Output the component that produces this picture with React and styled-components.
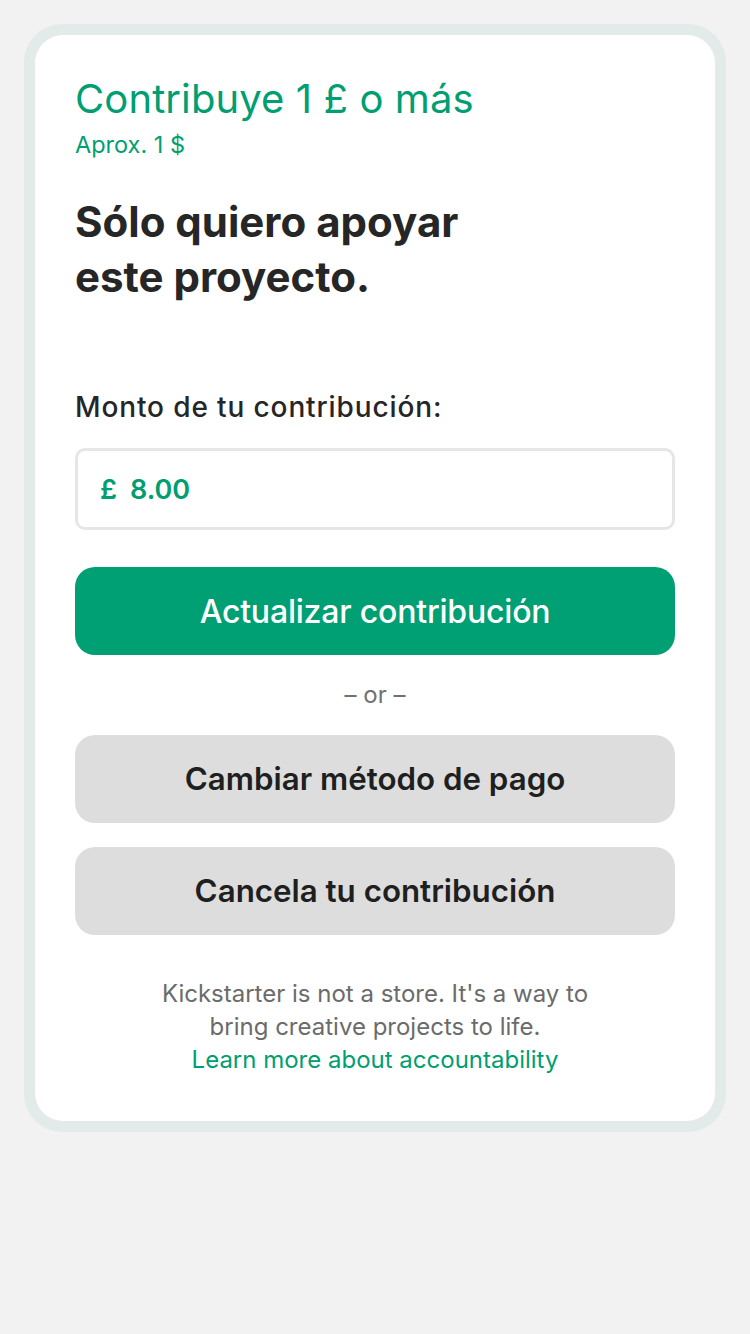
import React from 'react';
import styled, { createGlobalStyle } from 'styled-components';

const GlobalStyle = createGlobalStyle`
  html, body {
    margin: 0;
    padding: 0;
    background: #f2f2f2;
  }
  body {
    font-family: Inter, "Noto Sans", sans-serif;
    -webkit-font-smoothing: antialiased;
  }
`;

const Page = styled.main`
  padding: 24px;
  min-height: 1334px;
  box-sizing: border-box;
`;

const Frame = styled.div`
  background: #e2ebe9;
  border-radius: 38px;
  padding: 11px;
`;

const Card = styled.section`
  background: #fff;
  border-radius: 28px;
  padding: 40px 40px 45px;
  display: flex;
  flex-direction: column;
`;

const Title = styled.h2`
  margin: 0;
  font-size: 40px;
  line-height: 48px;
  font-weight: 400;
  color: #009e71;
  letter-spacing: 0.1px;
`;

const Approx = styled.p`
  margin: 8px 0 0;
  font-size: 23.5px;
  line-height: 28px;
  color: #009e71;
`;

const Heading = styled.h1`
  margin: 35px 0 0;
  font-size: 42px;
  line-height: 55px;
  font-weight: 700;
  color: #262626;
`;

const Label = styled.label`
  margin-top: 87px;
  font-size: 28px;
  line-height: 32px;
  font-weight: 500;
  color: #262626;
  letter-spacing: 0.88px;
`;

const AmountBox = styled.div`
  margin-top: 25px;
  height: 82px;
  box-sizing: border-box;
  border: 3px solid #e6e6e6;
  border-radius: 10px;
  display: flex;
  align-items: center;
  gap: 13px;
  padding: 0 22px;
  font-size: 27px;
  font-weight: 600;
  color: #009e71;
`;

const Button = styled.button`
  margin-top: ${p => p.$top}px;
  height: 88px;
  width: 100%;
  border: none;
  border-radius: 20px;
  font-family: inherit;
  font-size: ${p => (p.$primary ? 32 : 31.3)}px;
  font-weight: ${p => (p.$primary ? 500 : 600)};
  background: ${p => (p.$primary ? '#00a074' : '#dcdddc')};
  color: ${p => (p.$primary ? '#fff' : '#1f1f1f')};
  letter-spacing: ${p => (p.$primary ? -0.2 : 0)}px;
`;

const Or = styled.p`
  margin: 26px 0 0;
  text-align: center;
  font-size: 24px;
  line-height: 28px;
  color: #707070;
`;

const Footer = styled.p`
  margin: 42px auto 0;
  max-width: 500px;
  text-align: center;
  font-size: 24px;
  line-height: 33px;
  color: #6b6b6b;
`;

const Link = styled.a`
  color: #009e71;
  text-decoration: none;
`;

export default function App() {
  return (
    <Page>
      <GlobalStyle />
      <Frame>
        <Card>
          <Title>Contribuye 1 £ o más</Title>
          <Approx>Aprox. 1 $</Approx>
          <Heading>
            Sólo quiero apoyar
            <br />
            este proyecto.
          </Heading>
          <Label>Monto de tu contribución:</Label>
          <AmountBox>
            <span>£</span>
            <span>8.00</span>
          </AmountBox>
          <Button $primary $top={37}>Actualizar contribución</Button>
          <Or>– or –</Or>
          <Button $top={26}>Cambiar método de pago</Button>
          <Button $top={24}>Cancela tu contribución</Button>
          <Footer>
            Kickstarter is not a store. It's a way to
            <br />
            bring creative projects to life.
            <br />
            <Link href="#">Learn more about accountability</Link>
          </Footer>
        </Card>
      </Frame>
    </Page>
  );
}
